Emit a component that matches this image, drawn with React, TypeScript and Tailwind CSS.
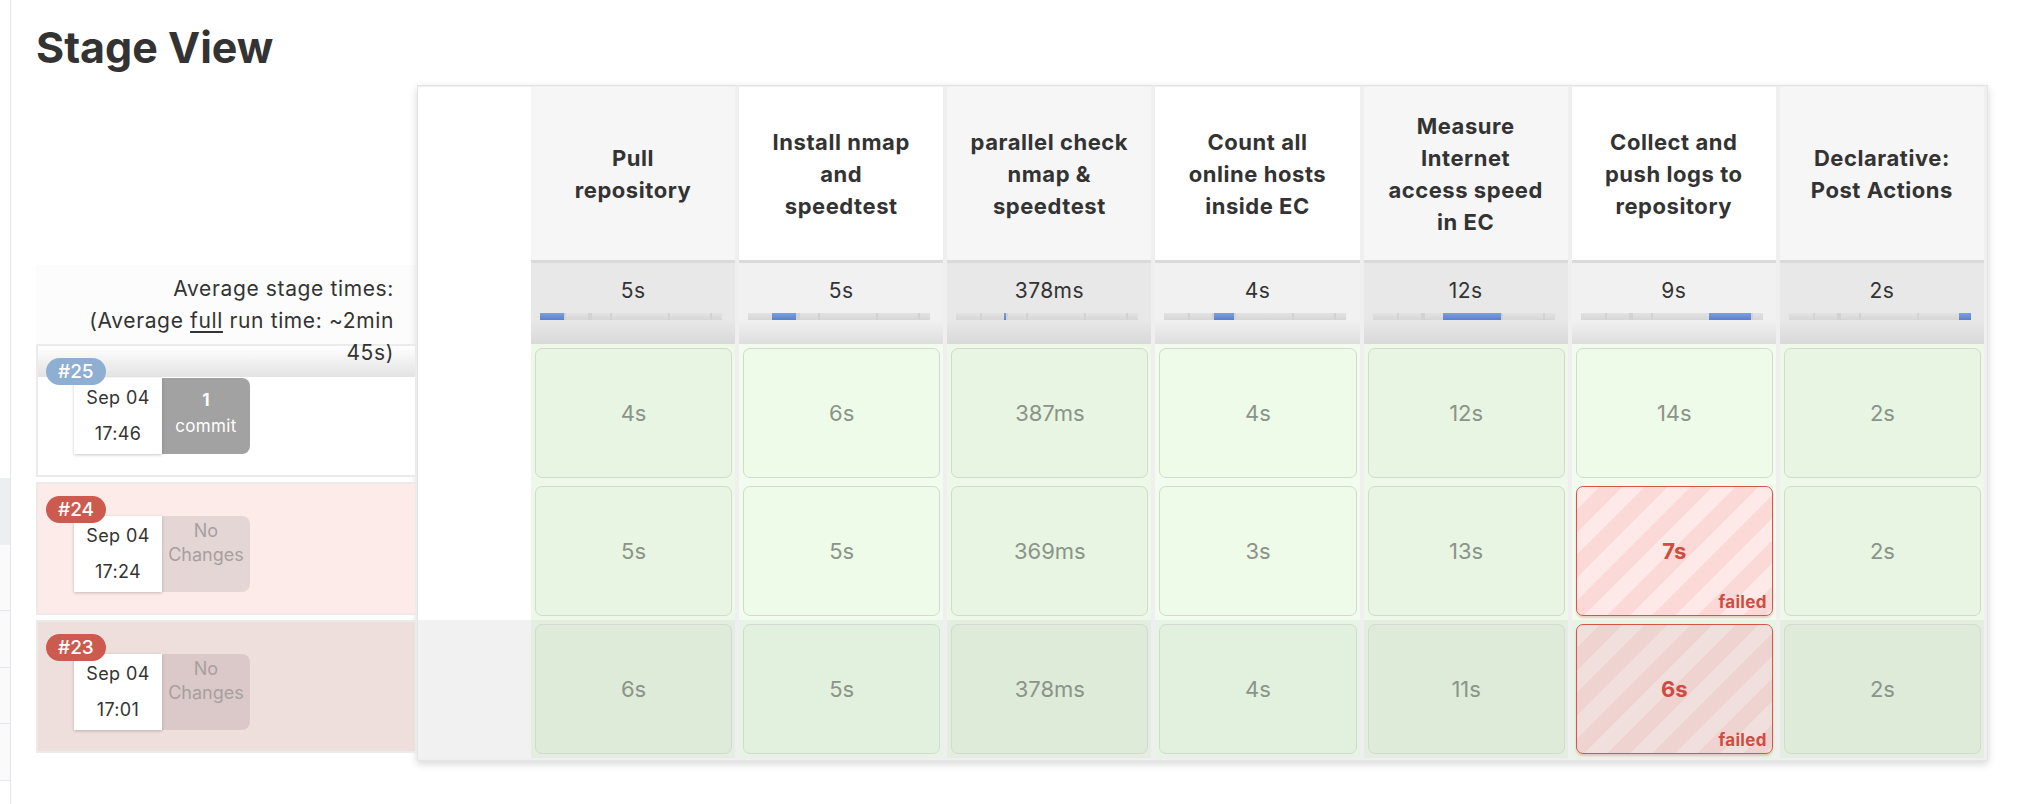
import React from 'react';

type Stage = { name: string[]; avg: string };

const stages: Stage[] = [
  { name: ['Pull', 'repository'], avg: '5s' },
  { name: ['Install nmap', 'and', 'speedtest'], avg: '5s' },
  { name: ['parallel check', 'nmap &', 'speedtest'], avg: '378ms' },
  { name: ['Count all', 'online hosts', 'inside EC'], avg: '4s' },
  { name: ['Measure', 'Internet', 'access speed', 'in EC'], avg: '12s' },
  { name: ['Collect and', 'push logs to', 'repository'], avg: '9s' },
  { name: ['Declarative:', 'Post Actions'], avg: '2s' },
];

// widths (px) of each stage inside the 182px average bar
const segs = [24, 24, 2, 20, 58, 42, 12];

type Run = {
  id: number;
  time: string;
  changes: string[] | null;
  times: string[];
  failedAt: number;
};

const runs: Run[] = [
  { id: 25, time: '17:46', changes: null, times: ['4s', '6s', '387ms', '4s', '12s', '14s', '2s'], failedAt: -1 },
  { id: 24, time: '17:24', changes: ['No', 'Changes'], times: ['5s', '5s', '369ms', '3s', '13s', '7s', '2s'], failedAt: 5 },
  { id: 23, time: '17:01', changes: ['No', 'Changes'], times: ['6s', '5s', '378ms', '4s', '11s', '6s', '2s'], failedAt: 5 },
];

function AvgBar({ active }: { active: number }) {
  return (
    <div className="ml-[9px] mt-[10px] flex h-[7px] w-[182px] bg-[#dcdcdc]">
      {segs.map((w, i) => (
        <div
          key={i}
          style={{ width: w }}
          className={
            i === active
              ? 'h-full bg-[linear-gradient(to_bottom,#7c9fe0,#5c80c9)]'
              : i === 0
              ? 'h-full bg-[linear-gradient(to_bottom,#e3e3e3,#d6d6d6)]'
              : 'h-full border-l-2 border-[#d2d2d2] bg-[linear-gradient(to_bottom,#e3e3e3,#d6d6d6)]'
          }
        />
      ))}
    </div>
  );
}

function SideStrip() {
  return (
    <div className="flex w-[10px] shrink-0 flex-col">
      <div className="h-[478px] bg-white" />
      <div className="h-[67px] bg-[#eceff2]" />
      <div className="h-[65px] bg-[#fafafa]" />
      <div className="h-px bg-[#e4e7ea]" />
      <div className="h-[56px] bg-[#fafafa]" />
      <div className="h-px bg-[#e4e7ea]" />
      <div className="h-[55px] bg-[#fafafa]" />
      <div className="h-px bg-[#e4e7ea]" />
      <div className="h-[56px] bg-[#fafafa]" />
      <div className="h-px bg-[#e4e7ea]" />
    </div>
  );
}

function RunBox({ run, index }: { run: Run; index: number }) {
  const rowBg = index === 0 ? 'bg-white' : index === 1 ? 'bg-[#fdebe9]' : 'bg-[#eedfdd]';
  const badgeBg = run.failedAt >= 0 ? 'bg-[#cd5a4f]' : 'bg-[#8eaed2]';
  const changesBg = index === 1 ? 'bg-[#e4d6d5]' : 'bg-[#dac9c8]';
  return (
    <div className={`relative h-[133px] border-2 border-[#ebebeb] ${rowBg} ${index > 0 ? 'mt-[5px]' : ''}`}>
      {index === 0 && (
        <div className="absolute inset-x-0 top-0 h-[31px] bg-[linear-gradient(to_bottom,#ffffff,#e3e3e3)]" />
      )}
      <div className={`absolute left-[8px] top-[12px] z-10 h-[27px] rounded-full px-[12px] text-[19px] font-medium leading-[27px] text-white ${badgeBg}`}>
        #{run.id}
      </div>
      <div className="ml-[36px] mt-[32px] flex">
        <div className="relative h-[76px] w-[88px] bg-white pt-[2px] text-center text-[18px] leading-[36px] tracking-[0.02em] text-[#333] shadow-[0_1px_3px_rgba(0,0,0,0.22)]">
          <div>Sep 04</div>
          <div>{run.time}</div>
        </div>
        {run.changes ? (
          <div className={`h-[76px] w-[88px] rounded-r-lg pt-[3px] text-center text-[18px] leading-[24px] text-[#a89f9e] ${changesBg}`}>
            <div>{run.changes[0]}</div>
            <div>{run.changes[1]}</div>
          </div>
        ) : (
          <div className="h-[76px] w-[88px] rounded-r-lg bg-[#a2a2a2] pt-[9px] text-center text-[17px] leading-[26px] tracking-[0.02em] text-white">
            <div className="font-bold">1</div>
            <div>commit</div>
          </div>
        )}
      </div>
    </div>
  );
}

function LeftPanel() {
  return (
    <div className="w-[381px] shrink-0">
      <div className="h-[180px]" />
      <div className="h-[79px] bg-[#fcfcfc] pr-[23px] pt-[8px]">
        <div className="relative z-20 text-right text-[21px] leading-[32px] tracking-[0.03em] text-[#333]">
          Average stage times:
          <br />
          (Average <span className="underline underline-offset-[3px]">full</span> run time: ~2min
          <br />
          45s)
        </div>
      </div>
      {runs.map((r, i) => (
        <RunBox key={r.id} run={r} index={i} />
      ))}
    </div>
  );
}

const headerBg = ['bg-[#f6f6f6]', 'bg-white'];
const avgBg = [
  'bg-[linear-gradient(to_bottom,#e8e8e8_0,#e8e8e8_70%,#d9d9d9_100%)]',
  'bg-[linear-gradient(to_bottom,#f1f1f1_0,#f1f1f1_70%,#dedede_100%)]',
];
const tdBg = [
  ['bg-[#edf8e9]', 'bg-[#f2fcee]'],
  ['bg-[#edf8e9]', 'bg-[#f2fcee]'],
  ['bg-[#e3eee0]', 'bg-[#e7f3e4]'],
];
const boxBg = [
  ['bg-[#e7f5e2]', 'bg-[#eefbe9]'],
  ['bg-[#e7f5e2]', 'bg-[#eefbe9]'],
  ['bg-[#ddebd8]', 'bg-[#e2f1de]'],
];
const failBg = [
  'bg-[repeating-linear-gradient(135deg,#fde9e7_0,#fde9e7_16px,#fad9d6_16px,#fad9d6_32px)]',
  'bg-[repeating-linear-gradient(135deg,#fde9e7_0,#fde9e7_16px,#fad9d6_16px,#fad9d6_32px)]',
  'bg-[repeating-linear-gradient(135deg,#f1dfdd_0,#f1dfdd_16px,#eed3d0_16px,#eed3d0_32px)]',
];

function StageTable() {
  return (
    <div className="w-[1571px] shrink-0 border border-[#e2e5e8] bg-[#efefef] pb-[2px] pr-[3px] pt-px shadow-[0_3px_8px_rgba(0,0,0,0.16)]">
      <div className="grid grid-cols-[109px_repeat(7,minmax(0,1fr))] gap-x-[4px]">
        {/* stage names */}
        <div className="-mr-[4px] bg-white" />
        {stages.map((s, i) => (
          <div
            key={s.avg + i}
            className={`flex h-[173px] flex-col items-center justify-center text-center text-[22px] font-bold leading-[32px] tracking-[0.025em] text-[#333] ${headerBg[i % 2]}`}
          >
            {s.name.map((l) => (
              <div key={l}>{l}</div>
            ))}
          </div>
        ))}

        {/* average times */}
        <div className="-mr-[4px] bg-white" />
        {stages.map((s, i) => (
          <div key={'avg' + i} className={`h-[84px] border-t-[3px] border-[#dadada] pt-[16px] ${avgBg[i % 2]}`}>
            <div className="text-center text-[21px] leading-[24px] tracking-[0.02em] text-[#333]">{s.avg}</div>
            <AvgBar active={i} />
          </div>
        ))}

        {/* runs */}
        {runs.map((r, ri) => (
          <React.Fragment key={r.id}>
            <div className={`-mr-[4px] h-[138px] ${ri === 2 ? 'bg-[#f1f1f1]' : 'bg-white'}`} />
            {r.times.map((t, ci) => {
              const failed = ci === r.failedAt;
              return (
                <div key={ci} className={`h-[138px] pb-[4px] pl-[4px] pr-[3px] pt-[4px] ${tdBg[ri][ci % 2]}`}>
                  {failed ? (
                    <div className={`relative flex h-full items-center justify-center rounded-[7px] border-[1.5px] border-[#d4564b] shadow-[0_2px_2px_rgba(210,80,70,0.25)] ${failBg[ri]}`}>
                      <span className="text-[22px] font-bold text-[#cf4c40]">{t}</span>
                      <span className="absolute bottom-[2px] right-[5px] text-[17px] font-bold leading-[22px] tracking-[0.02em] text-[#cf4c40]">
                        failed
                      </span>
                    </div>
                  ) : (
                    <div className={`flex h-full items-center justify-center rounded-[7px] border border-[#d3d9d1] text-[22px] text-[#8b9489] ${boxBg[ri][ci % 2]}`}>
                      {t}
                    </div>
                  )}
                </div>
              );
            })}
          </React.Fragment>
        ))}
      </div>
    </div>
  );
}

export default function App() {
  return (
    <div className="flex min-h-[804px] w-[2040px] bg-white text-[#333] [font-family:Inter,'Noto_Sans',sans-serif]">
      <SideStrip />
      <div className="w-px shrink-0 bg-[#e3e6ea]" />
      <main className="flex-1 pl-[25px]">
        <h2 className="mt-[26px] text-[43px] font-bold leading-none text-[#333]">Stage View</h2>
        <div className="mt-[16px] flex items-start">
          <LeftPanel />
          <StageTable />
        </div>
      </main>
    </div>
  );
}
